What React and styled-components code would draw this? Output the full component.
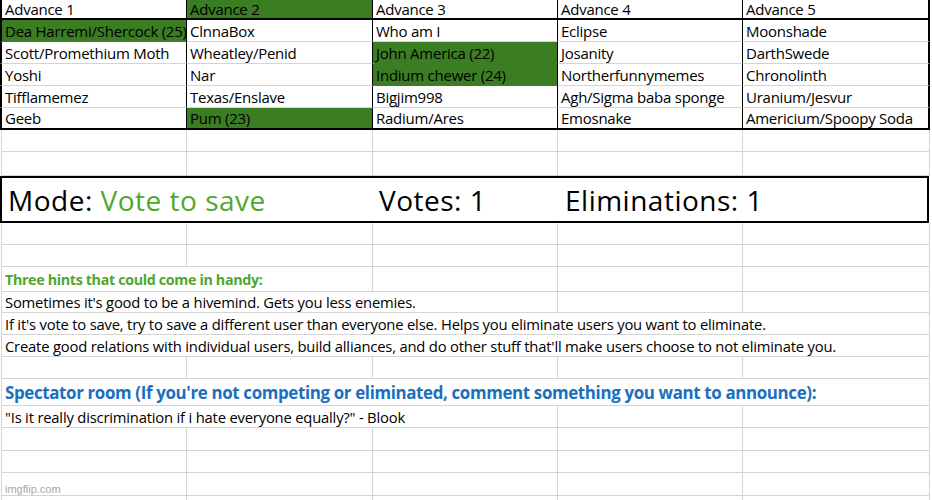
import React from 'react'
import styled, { createGlobalStyle } from 'styled-components'

const GlobalStyle = createGlobalStyle`
  html, body {
    margin: 0;
    padding: 0;
    background: #fff;
  }
  body {
    font-family: "Open Sans", "Liberation Sans", sans-serif;
    color: #000;
  }
`;

const COLS = '187px 186px 185px 185px 187px';
const GRID = '#d4d4d4';
const FILL = '#3a7d22';

const Sheet = styled.div`
  position: relative;
  width: 932px;
  height: 500px;
  overflow: hidden;
`;

const Grid = styled.div`
  display: grid;
  grid-template-columns: ${COLS};
`;

const TableCell = styled.div`
  box-sizing: border-box;
  height: ${p => p.$h}px;
  display: flex;
  align-items: center;
  padding-left: 3px;
  font-size: 15px;
  letter-spacing: -0.25px;
  white-space: nowrap;
  overflow: hidden;
  background: ${p => (p.$green ? FILL : '#fff')};
  border-left: ${p => (p.$first ? '2px solid #000' : 'none')};
  border-right: ${p => (p.$last ? '2px solid #000' : '1px solid #000')};
  border-bottom: ${p =>
    p.$heavy ? '2px solid #000' : `1px solid ${p.$green ? FILL : GRID}`};
`;

const GridCell = styled.div`
  box-sizing: border-box;
  height: ${p => p.$h}px;
  grid-column: span ${p => p.$span || 1};
  display: flex;
  align-items: center;
  padding-left: 3px;
  white-space: nowrap;
  overflow: visible;
  border-right: 1px solid ${GRID};
  border-bottom: 1px solid ${GRID};
  ${p => p.$first && `border-left: 1px solid ${GRID}; margin-left: 1px;`}
`;

const Plain = styled.span`
  font-size: 14.8px;
  letter-spacing: -0.2px;
`;

const Heading = styled.span`
  font-weight: 700;
  font-size: ${p => p.$size}px;
  color: ${p => p.$color};
  letter-spacing: -0.35px;
`;

const StatusBox = styled.div`
  display: grid;
  grid-template-columns: 373px 185px 1fr;
  box-sizing: border-box;
  width: 929px;
  height: 47px;
  border: 2px solid #000;
`;

const Stat = styled.div`
  display: flex;
  align-items: center;
  padding-left: ${p => p.$pad}px;
  font-size: 28px;
  letter-spacing: 0.5px;
  white-space: nowrap;
`;

const Accent = styled.span`
  color: #4ea72e;
`;

const Watermark = styled.div`
  position: absolute;
  left: 5px;
  bottom: 5px;
  font-family: "Liberation Sans", sans-serif;
  font-size: 11px;
  color: #a8a8a8;
`;

const headers = ['Advance 1', 'Advance 2', 'Advance 3', 'Advance 4', 'Advance 5'];

const rows = [
  ['Dea Harremi/Shercock (25)', 'ClnnaBox', 'Who am I', 'Eclipse', 'Moonshade'],
  ['Scott/Promethium Moth', 'Wheatley/Penid', 'John America (22)', 'Josanity', 'DarthSwede'],
  ['Yoshi', 'Nar', 'Indium chewer (24)', 'Northerfunnymemes', 'Chronolinth'],
  ['Tifflamemez', 'Texas/Enslave', 'Bigjim998', 'Agh/Sigma baba sponge', 'Uranium/Jesvur'],
  ['Geeb', 'Pum (23)', 'Radium/Ares', 'Emosnake', 'Americium/Spoopy Soda'],
];

const greenCells = new Set(['h-1', '0-0', '1-2', '2-2', '4-1']);

const BlankRow = ({ h }) => (
  <Grid>
    {[0, 1, 2, 3, 4].map(i => (
      <GridCell key={i} $h={h} $first={i === 0} />
    ))}
  </Grid>
);

// a row whose text runs across `span` columns, the rest stay empty cells
const TextRow = ({ h, span, children }) => (
  <Grid>
    <GridCell $h={h} $span={span} $first>
      {children}
    </GridCell>
    {Array.from({ length: 5 - span }).map((_, i) => (
      <GridCell key={i} $h={h} />
    ))}
  </Grid>
);

export default function App() {
  return (
    <Sheet>
      <GlobalStyle />
      <Grid>
        {headers.map((t, i) => (
          <TableCell
            key={t}
            $h={20}
            $heavy
            $first={i === 0}
            $last={i === 4}
            $green={greenCells.has(`h-${i}`)}
          >
            {t}
          </TableCell>
        ))}
        {rows.map((row, r) =>
          row.map((t, c) => (
            <TableCell
              key={`${r}-${c}`}
              $h={22}
              $heavy={r === rows.length - 1}
              $first={c === 0}
              $last={c === 4}
              $green={greenCells.has(`${r}-${c}`)}
            >
              {t}
            </TableCell>
          ))
        )}
      </Grid>

      <BlankRow h={22} />
      <BlankRow h={24} />

      <StatusBox>
        <Stat $pad={6}>
          Mode:&nbsp;<Accent>Vote to save</Accent>
        </Stat>
        <Stat $pad={4}>Votes: 1</Stat>
        <Stat $pad={5}>Eliminations: 1</Stat>
      </StatusBox>

      <BlankRow h={22} />
      <BlankRow h={22} />
      <TextRow h={25} span={2}>
        <Heading $size={14.3} $color="#4ea72e">Three hints that could come in handy:</Heading>
      </TextRow>
      <TextRow h={21} span={3}>
        <Plain>Sometimes it's good to be a hivemind. Gets you less enemies.</Plain>
      </TextRow>
      <TextRow h={22} span={5}>
        <Plain>If it's vote to save, try to save a different user than everyone else. Helps you eliminate users you want to eliminate.</Plain>
      </TextRow>
      <TextRow h={22} span={5}>
        <Plain>Create good relations with individual users, build alliances, and do other stuff that'll make users choose to not eliminate you.</Plain>
      </TextRow>
      <BlankRow h={22} />
      <TextRow h={27} span={5}>
        <Heading $size={16.9} $color="#1a6fbe">Spectator room (If you're not competing or eliminated, comment something you want to announce):</Heading>
      </TextRow>
      <TextRow h={22} span={3}>
        <Plain>"Is it really discrimination if i hate everyone equally?" - Blook</Plain>
      </TextRow>
      <BlankRow h={23} />
      <BlankRow h={22} />
      <BlankRow h={23} />
      <BlankRow h={22} />

      <Watermark>imgflip.com</Watermark>
    </Sheet>
  );
}
